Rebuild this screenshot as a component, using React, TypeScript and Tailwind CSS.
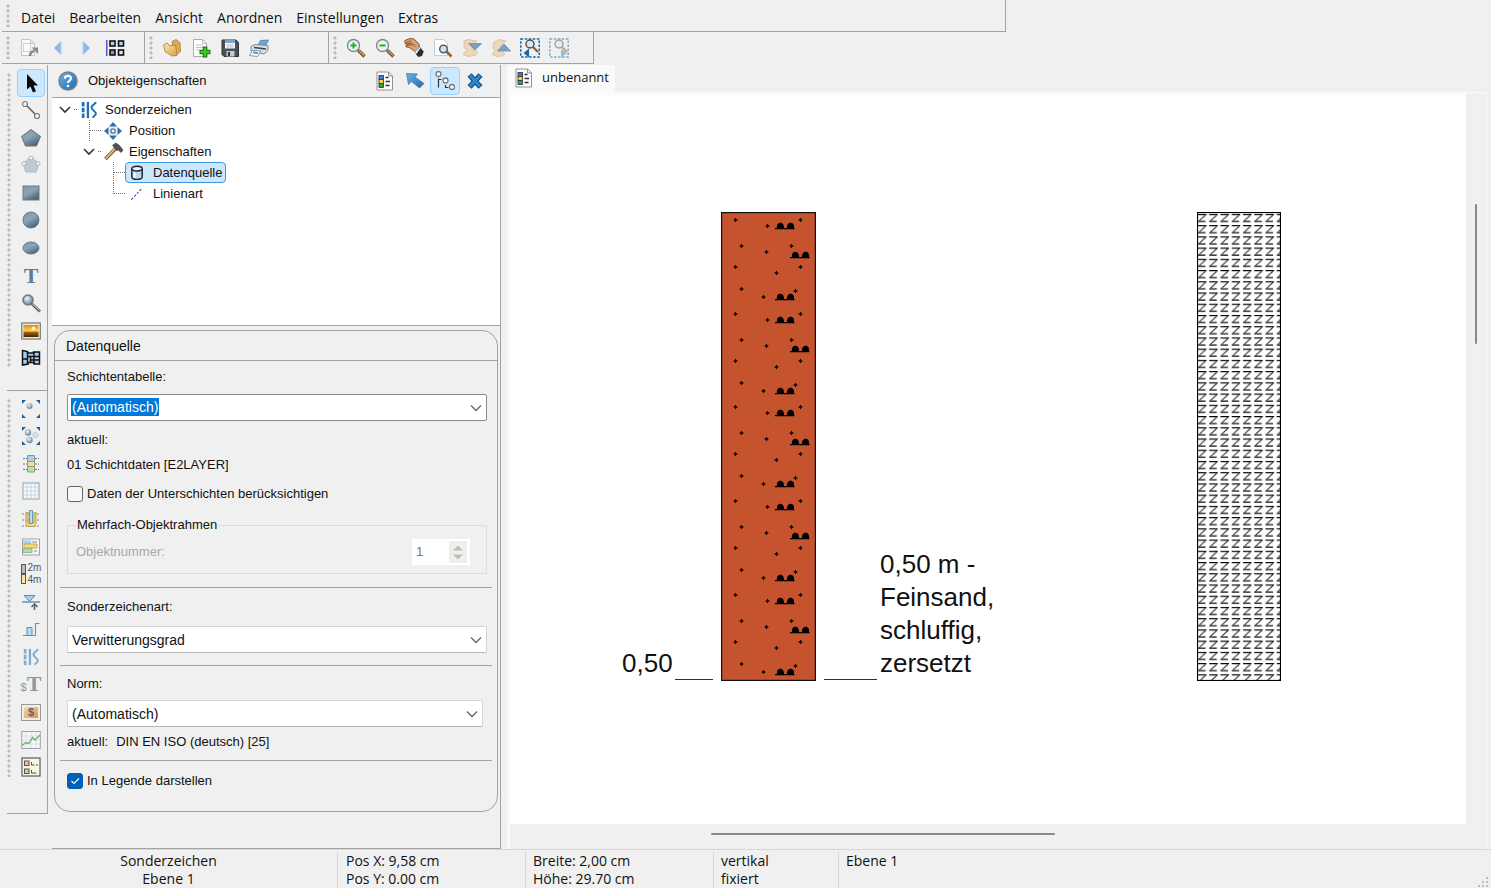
import { ReactNode, useState } from "react";

const UI_FONT = "font-['Open_Sans','Noto_Sans',sans-serif]";
const FORM_FONT = "font-['Liberation_Sans',Arial,sans-serif]";

function Svg({ children, size = "size-5" }: { children: ReactNode; size?: string }) {
  return (
    <svg viewBox="0 0 20 20" className={`shrink-0 ${size}`} fill="none" aria-hidden="true">
      {children}
    </svg>
  );
}

function Gradients() {
  return (
    <svg className="absolute size-0" aria-hidden="true">
      <defs>
        <linearGradient id="steel" x1="0" y1="0" x2="0.6" y2="1">
          <stop offset="0" stopColor="#7d98ab" />
          <stop offset="0.5" stopColor="#8aa5b8" />
          <stop offset="1" stopColor="#4d667a" />
        </linearGradient>
        <linearGradient id="folder" x1="0" y1="0" x2="1" y2="1">
          <stop offset="0" stopColor="#fae5ae" />
          <stop offset="1" stopColor="#d9a545" />
        </linearGradient>
        <linearGradient id="blue" x1="0" y1="0" x2="1" y2="1">
          <stop offset="0" stopColor="#6db4e8" />
          <stop offset="1" stopColor="#1c68ae" />
        </linearGradient>
        <linearGradient id="sunset" x1="0" y1="0" x2="0" y2="1">
          <stop offset="0" stopColor="#d98a12" />
          <stop offset="0.5" stopColor="#ffd35c" />
          <stop offset="0.6" stopColor="#a95f0c" />
          <stop offset="1" stopColor="#3d260d" />
        </linearGradient>
        <radialGradient id="ball" cx="0.4" cy="0.35" r="0.7">
          <stop offset="0" stopColor="#eef4f8" />
          <stop offset="1" stopColor="#5c7b92" />
        </radialGradient>
      </defs>
    </svg>
  );
}

/* ---------- toolbar icons ---------- */

const PageExport = () => (
  <Svg>
    <path d="M2.500 1.500h9l4 4v12h-13z" fill="#fafafa" stroke="#c2c5cc" />
    <path d="M11.500 1.500v4h4" stroke="#c2c5cc" />
    <path d="M4.500 5.500h7v8h-7z" stroke="#9aa0ee" strokeDasharray="1 1" />
    <path d="M11 18c0-3 1-4.500 4-5" stroke="#898989" strokeWidth="2.400" />
    <path d="M12.500 9.500h6.500v6.500z" fill="#898989" />
  </Svg>
);

const Prev = () => (
  <Svg>
    <path d="M13 3.500v13L6 10z" fill="#8fb8ea" stroke="#b5cff0" />
  </Svg>
);

const Next = () => (
  <Svg>
    <path d="M6 3.500v13L13 10z" fill="#8fb8ea" stroke="#b5cff0" />
  </Svg>
);

const Tiles = () => (
  <Svg>
    <path d="M.8 2v16" stroke="#2334c0" strokeWidth="1.200" />
    <g fill="#b9d2f3" stroke="#111" strokeWidth="1.600">
      <rect x="4" y="3" width="5" height="5" />
      <rect x="12.500" y="3" width="5" height="5" />
      <rect x="4" y="12" width="5" height="5" fill="#6b9bdc" />
      <rect x="12.500" y="12" width="5" height="5" fill="#dbe8fa" />
    </g>
  </Svg>
);

const OpenFolder = () => (
  <Svg>
    <path d="M10 3.500l4-2 4 3 .5 9-5.500 4z" fill="#dca954" stroke="#a67d35" strokeWidth=".8" />
    <path d="M1.500 7l3.500-2 2.500 2.500 6-.5 1.500 10.500-5 .5L3 13.500z" fill="url(#folder)" stroke="#a67d35" strokeWidth=".8" />
  </Svg>
);

const AddPage = () => (
  <Svg>
    <path d="M2.500 1.500h9l4 4v13h-13z" fill="#fdfdfd" stroke="#a9adb3" />
    <path d="M11.500 1.500v4h4M5 7h7M5 9.500h8M5 12h5" stroke="#bfc3c8" />
    <path d="M14 8.500v11M8.500 14h11" stroke="#16750b" strokeWidth="4.600" />
    <path d="M14 9.500v9M9.500 14h9" stroke="#40c32b" strokeWidth="2.600" />
  </Svg>
);

const Save = () => (
  <Svg>
    <path d="M2 2h14l2.500 2.500v14H4L2 16.500z" fill="#4a5159" stroke="#2d3238" />
    <path d="M5 2.500h10v8H5z" fill="#f3f7fb" />
    <path d="M5 2.500h10v2.500H5z" fill="#74a9d8" />
    <path d="M6.500 7h7M6.500 9h7" stroke="#b4bdc5" />
    <path d="M6.500 13h8v5.500h-8z" fill="#c5cad0" />
    <path d="M8 14h2v4H8z" fill="#2d3238" />
  </Svg>
);

const Print = () => (
  <Svg>
    <path d="M8.500 8l3-5.500 8-.5-3.500 6.500z" fill="#69abe0" stroke="#5c7990" strokeWidth=".8" />
    <path d="M2 8.500l4-2 13 1v5l-4 3.500-13-3z" fill="#d7dde2" stroke="#69757f" strokeWidth=".8" />
    <path d="M5 9.500l12 1.500" stroke="#3a4650" strokeWidth="1.500" />
    <path d="M3.500 12.500l8.500.5-3.500 5.500-8-1z" fill="#fff" stroke="#63809a" strokeWidth=".8" />
    <path d="M4 14.500l5 .5" stroke="#4f9bdb" strokeWidth="2" />
  </Svg>
);

function Loupe({ sign }: { sign: "plus" | "minus" }) {
  return (
    <Svg>
      <path d="M11.500 11.500l2 2" stroke="#666" strokeWidth="2" />
      <path d="M12.500 12.500l6 6" stroke="#7c5a32" strokeWidth="3.500" />
      <path d="M13 12.500l5 5" stroke="#c59b63" strokeWidth="1.200" />
      <circle cx="7.500" cy="7.500" r="6" fill="#e4f6ea" stroke="#7e8a92" strokeWidth="1.400" />
      <path d="M4.500 7.500h6" stroke="#2ca92c" strokeWidth="2" />
      {sign === "plus" && <path d="M7.500 4.500v6" stroke="#2ca92c" strokeWidth="2" />}
    </Svg>
  );
}

const Hand = () => (
  <Svg>
    <path d="M.8 2.500l5-2 4 .5 5 4.500 1 5-4 3.500-6.500-4.500-3-.5-.5-1.500 3-.5L1 5.500z" fill="#d9a071" stroke="#7d4c29" strokeWidth=".9" />
    <path d="M2 4.500l5-1.500M2.500 6l6-1M5 7l4-.5 2.500 2" stroke="#8d5933" />
    <path d="M16 9l1.500 1.500-4.500 6-2-2.500z" fill="#f4f4f4" stroke="#999" strokeWidth=".6" />
    <path d="M16.500 10l3.200 3.500-1.700 4.500-3.500 1-2.500-2.500z" fill="#2c2c2c" />
  </Svg>
);

const PageZoom = () => (
  <Svg>
    <path d="M1.500 1.500h9l4 4v12h-13z" fill="#fcfcfc" stroke="#c6c9cd" />
    <path d="M13.500 13.500l5 5" stroke="#8c6538" strokeWidth="2.600" />
    <circle cx="10.500" cy="11" r="3.800" fill="#cfe3f3" stroke="#555e66" strokeWidth="1.500" />
  </Svg>
);

const LayerDown = () => (
  <Svg>
    <path d="M2 3l4-1.500 9 1.500-6 4 1 4 6 3-3 3.500-7 1-5-2 2-3 3-1-4-3z" fill="#ecd7bb" stroke="#d5bd9f" strokeWidth=".8" />
    <path d="M6.500 5.500h13l-6.500 6.500z" fill="#7f9fc2" stroke="#7897ba" />
  </Svg>
);

const LayerUp = () => (
  <Svg>
    <path d="M3 4l5-2.500 7 1.500-5 4-1 5 5 4-2 2-6 .5-5-2 3-3.500-2-3z" fill="#ecd7bb" stroke="#d5bd9f" strokeWidth=".8" />
    <path d="M6.500 13h13l-6.500-7z" fill="#7f9fc2" stroke="#7897ba" />
  </Svg>
);

function RegionZoom({ direction }: { direction: "back" | "forward" }) {
  return (
    <Svg>
      <g opacity={direction === "forward" ? 0.5 : 1}>
        <path d="M.8 1h18.400v18H.8z" stroke="#1668a8" strokeWidth="1.500" strokeDasharray="2.500 1.500" />
        <path d="M13 9l5 5" stroke="#8c6538" strokeWidth="2.400" />
        <circle cx="10" cy="6" r="4" fill="#d6e8f6" stroke="#4d4d4d" strokeWidth="1.400" />
        {direction === "back" ? (
          <path d="M9 10.500v9L3.500 15z" fill="#1668a8" />
        ) : (
          <path d="M12 11v8.500l6-4.200z" fill="#4b86bd" />
        )}
      </g>
    </Svg>
  );
}

/* ---------- panel icons ---------- */

const Help = () => (
  <Svg>
    <circle cx="10" cy="10" r="9" fill="url(#blue)" stroke="#71808c" strokeWidth="1.500" />
    <path d="M6.800 7.800c0-4 6.600-3.800 6.200-.3-.2 1.800-3 2-3 4.500" stroke="#fff" strokeWidth="2.100" />
    <circle cx="10" cy="15" r="1.300" fill="#fff" />
  </Svg>
);

const LegendPage = () => (
  <Svg>
    <path d="M2 1h11.500l4 4v14H2z" fill="#fdfdfd" stroke="#8e9297" />
    <path d="M13.500 1v4h4" stroke="#8e9297" />
    <rect x="4" y="4.500" width="4.500" height="4" fill="#3b79c4" stroke="#333" strokeWidth=".8" />
    <rect x="4" y="8.500" width="4.500" height="4" fill="#f3d33e" stroke="#333" strokeWidth=".8" />
    <rect x="4" y="12.500" width="4.500" height="4" fill="#3d9b43" stroke="#333" strokeWidth=".8" />
    <path d="M10.500 6.500h3M10.500 10.500h4.500M10.500 14.500h4" stroke="#333" strokeWidth="1.300" />
  </Svg>
);

const BackArrow = () => (
  <Svg>
    <path d="M1.500 2.500l11 .5-2.500 3 9 6.500-4.500 4.500-8-6.500-3 3z" fill="url(#blue)" stroke="#527b9d" strokeWidth=".8" />
  </Svg>
);

const TreeMode = () => (
  <Svg>
    <g stroke="#777" strokeWidth="1.300" fill="#fff">
      <circle cx="3.500" cy="3" r="2.500" />
      <circle cx="10.500" cy="9.500" r="2.500" />
      <circle cx="17" cy="16" r="2.500" />
    </g>
    <path d="M3.500 7.500v9M3.500 8.500h3M10.500 14v2.500h3" stroke="#333" strokeWidth="1.200" />
  </Svg>
);

const Close = () => (
  <Svg>
    <path d="M4.500 4l11 12M15.500 4l-11 12" stroke="#174e7c" strokeWidth="5.500" />
    <path d="M5 4.500l10 11M15 4.500l-10 11" stroke="#2f86cc" strokeWidth="3.200" />
  </Svg>
);

const Weathering = ({ color = "#1f6fb2" }: { color?: string }) => (
  <Svg size="size-[18px]">
    <path d="M3.500 1v18" stroke={color} strokeWidth="3" strokeDasharray="5 1.500" />
    <path d="M8.800 1v18" stroke={color} strokeWidth="2.600" />
    <path d="M18 1.500l-4.500 4c-1.500 2-.5 3.500 1.500 5s3.500 3 2 5l-3 3" stroke={color} strokeWidth="2.200" />
  </Svg>
);

const Move = () => (
  <Svg size="size-[18px]">
    <path d="M10 0l4.500 5h-9zM10 20l4.500-5h-9zM0 10l5-4.500v9zM20 10l-5-4.500v9z" fill="#2a6cae" />
    <path d="M6 6h8v8H6z" fill="#c9dcec" />
    <circle cx="10" cy="10" r="2.300" fill="#f5f8fb" stroke="#4d6477" strokeWidth="1.200" />
  </Svg>
);

const Hammer = () => (
  <Svg size="size-[19px]">
    <path d="M12.500 6.500L1.500 18" stroke="#7b582e" strokeWidth="3.800" />
    <path d="M12.500 6L2 17.500" stroke="#dcb980" strokeWidth="2" />
    <path d="M9 3.500l3.500-2.500 3.500 2.500 4 5-2 2.500-3-2.500-1.500.5-2.500-3z" fill="#555" stroke="#292929" strokeWidth=".6" />
  </Svg>
);

const Database = () => (
  <Svg size="size-4">
    <path d="M3.500 5v10c0 4 13 4 13 0V5" fill="#bcd6ec" stroke="#1b2630" strokeWidth="1.800" />
    <ellipse cx="10" cy="4.500" rx="6.500" ry="3" fill="#f1f7fc" stroke="#1b2630" strokeWidth="1.800" />
    <path d="M7 9.500v6.500" stroke="#fff" strokeWidth="2.500" />
  </Svg>
);

const LineStyle = () => (
  <Svg size="size-4">
    <path d="M3 17L16 3" stroke="#3144b3" strokeWidth="1.300" strokeDasharray="3 2" />
  </Svg>
);

/* ---------- drawing tools ---------- */

const PointerTool = () => (
  <Svg>
    <path d="M6 1v15.500l3.500-3 2.500 6 3-1.300-2.500-5.700h4.500z" fill="#0a0a0a" />
  </Svg>
);

const LineTool = () => (
  <Svg>
    <path d="M5 5l10 10" stroke="#555" strokeWidth="1.400" />
    <circle cx="4" cy="4" r="2.500" fill="#f5f5f5" stroke="#777" strokeWidth="1.200" />
    <circle cx="16" cy="16" r="2.500" fill="#f5f5f5" stroke="#777" strokeWidth="1.200" />
  </Svg>
);

const PolygonTool = () => (
  <Svg>
    <path d="M10 1.500l9.500 7-4 9.500h-11l-4-9.500z" fill="url(#steel)" stroke="#6a7276" />
  </Svg>
);

const EditPolygonTool = () => (
  <Svg>
    <path d="M10 2l8 6.500-3 8.500H5L2 8.500z" fill="#bccad3" stroke="#b2babf" />
    <g fill="#f5f5f5" stroke="#b0b6ba">
      <circle cx="10" cy="3" r="2" />
      <circle cx="3" cy="8.500" r="2" />
      <circle cx="17" cy="8.500" r="2" />
    </g>
  </Svg>
);

const RectTool = () => (
  <Svg>
    <rect x="2" y="3" width="16" height="14" fill="url(#steel)" stroke="#6f787d" />
  </Svg>
);

const CircleTool = () => (
  <Svg>
    <circle cx="10" cy="10" r="8" fill="url(#steel)" stroke="#6f787d" />
  </Svg>
);

const EllipseTool = () => (
  <Svg>
    <ellipse cx="10" cy="10" rx="8" ry="6" fill="url(#steel)" stroke="#6f787d" />
  </Svg>
);

function TextTool() {
  return (
    <span className="font-['Liberation_Serif',serif] text-[22px] leading-5 font-bold text-[#5f7d92]" aria-hidden="true">
      T
    </span>
  );
}

const SearchTool = () => (
  <Svg>
    <path d="M10 10l9 8.500" stroke="#666" strokeWidth="3" />
    <path d="M11 10.500l7.500 7" stroke="#ccc" strokeWidth="1" />
    <circle cx="7" cy="7" r="5" fill="url(#ball)" stroke="#777" strokeWidth="1.600" />
  </Svg>
);

const ImageTool = () => (
  <Svg>
    <rect x=".8" y="2" width="18.500" height="16" fill="#efe9df" stroke="#777" strokeWidth="1.200" />
    <rect x="2.500" y="4" width="15" height="12" fill="url(#sunset)" />
    <circle cx="12.500" cy="7.500" r="2" fill="#fff4b8" />
  </Svg>
);

const MapTool = () => (
  <Svg>
    <path d="M1.500 2.500l5 1v1.500h6v-1h6v12h-5.500v-1.500h-6v1.500l-5.500 1z" fill="#a4ccf0" stroke="#111" strokeWidth="1.500" />
    <path d="M6.500 4v12.500M13 4v12M2 11h4.500M6.500 8.500h12M9.500 8.500v6M9.500 12h9" stroke="#111" strokeWidth="1.400" />
  </Svg>
);

/* ---------- geology tools ---------- */

function Corners() {
  return <path d="M1 5V1h4zM19 5V1h-4zM1 15v4h4zM19 15v4h-4z" fill="#1d5e97" />;
}

const FrameOne = () => (
  <Svg>
    <Corners />
    <circle cx="8.500" cy="7" r="3" fill="url(#ball)" />
  </Svg>
);

const FrameMany = () => (
  <Svg>
    <Corners />
    <circle cx="7" cy="6.500" r="3.200" fill="url(#ball)" />
    <circle cx="14.500" cy="9" r="2.800" fill="#d4dfe7" stroke="#b7c3cb" strokeWidth=".6" />
    <circle cx="8.500" cy="14" r="3.200" fill="url(#ball)" />
  </Svg>
);

const ColumnTool = () => (
  <Svg>
    <path d="M2 4.500h16M2 10h16M2 15.500h16" stroke="#777" strokeWidth="1.200" strokeDasharray="2 1" />
    <path d="M6.500 1.500h7v6h-7z" fill="#a8d0f0" stroke="#8399aa" />
    <path d="M6.500 7.500h7v5h-7z" fill="#f5df8f" stroke="#a39a70" />
    <path d="M6.500 12.500h7v5.500h-7z" fill="#b7e3ab" stroke="#86a07c" />
  </Svg>
);

const GridTool = () => (
  <Svg>
    <rect x="2" y="2" width="16" height="16" fill="#f6f9fb" stroke="#a5b2bc" strokeWidth="1.300" />
    <path d="M6 2v16M10 2v16M14 2v16M2 6h16M2 10h16M2 14h16" stroke="#c8d4de" />
  </Svg>
);

const WellTool = () => (
  <Svg>
    <path d="M1 5h18M1 11h18M1 17h18" stroke="#888" strokeDasharray="2 1" />
    <path d="M5 3.500h2v10h6v-10h2v11l-2 3H7l-2-3z" fill="#f0dc88" stroke="#b49d4a" />
    <path d="M8.500 1.500h3v13h-3z" fill="#b7dcf2" stroke="#6696b5" />
  </Svg>
);

const SectionTool = () => (
  <Svg>
    <rect x="1.500" y="2" width="17" height="16" fill="#f6f6f6" stroke="#9da3a7" />
    <path d="M2 3.500h8v3.500H2z" fill="#a8d0f0" />
    <path d="M3 7h13v4H3z" fill="#f3dc7a" stroke="#a9954a" strokeWidth=".7" />
    <path d="M2 11.500h9v4H2z" fill="#b3dda6" stroke="#7ca26f" strokeWidth=".7" />
    <path d="M11 5h5M13 14h3" stroke="#888" />
  </Svg>
);

function ScaleTool() {
  return (
    <span className="flex items-center gap-[2px]" aria-hidden="true">
      <svg viewBox="0 0 5 20" className="h-5 w-[5px]">
        <rect x=".5" y=".5" width="4" height="9" fill="#bbb" stroke="#555" />
        <rect x=".5" y="10.500" width="4" height="9" fill="#ffe5a0" stroke="#555" />
      </svg>
      <span className="flex flex-col font-['Liberation_Sans',sans-serif] text-[10px] leading-[12px] text-[#555]">
        <span>2m</span>
        <span>4m</span>
      </span>
    </span>
  );
}

const WaterTool = () => (
  <Svg>
    <path d="M3 3.500h11l-5.500 6z" fill="#a5cff0" stroke="#5c8db4" />
    <path d="M1 10h18" stroke="#6d7d89" strokeWidth="1.300" />
    <path d="M13.500 18v-5M10.500 15l3-3 3 3" stroke="#666" strokeWidth="1.600" />
  </Svg>
);

const StepTool = () => (
  <Svg>
    <path d="M2 16.500h12.500V4.500h4" stroke="#7d8f9c" strokeWidth="1.200" />
    <path d="M6 8.500h5v8H6z" fill="#b8dcf5" stroke="#5c8db4" />
  </Svg>
);

function FieldTextTool() {
  return (
    <span className="flex items-end text-[#8599a8]" aria-hidden="true">
      <span className="font-['Liberation_Sans',sans-serif] text-[11px] leading-[14px]">$</span>
      <span className="font-['Liberation_Serif',serif] text-[22px] leading-5 font-bold">T</span>
    </span>
  );
}

function FieldImageTool() {
  return (
    <span
      className="flex h-[17px] w-5 items-center justify-center border border-[#999] bg-[#f1eee8] p-[2px]"
      aria-hidden="true"
    >
      <span className="flex-1 bg-gradient-to-br from-[#efd9ae] to-[#d19c48] text-center font-['Liberation_Sans',sans-serif] text-[11px] leading-[11px] font-bold text-[#6f5670]">
        $
      </span>
    </span>
  );
}

const ChartTool = () => (
  <Svg>
    <rect x=".8" y="1.500" width="18.500" height="17" fill="#f4f7fa" stroke="#9ba2a8" />
    <path d="M1 6h18M1 10h18M1 14h18M5 2v16M10 2v16M15 2v16" stroke="#d3dde6" strokeWidth=".8" />
    <path d="M1 15.500l4-3 3 1 3.500-6 2.500 2.500 5-5" stroke="#76b06c" strokeWidth="1.400" />
  </Svg>
);

const LegendTool = () => (
  <Svg>
    <rect x="1" y="1" width="18" height="18" fill="#f8f5e4" stroke="#666" strokeWidth="1.300" />
    <rect x="3.500" y="4" width="4.500" height="4.500" fill="#f3b4b4" stroke="#555" />
    <rect x="3.500" y="12" width="4.500" height="4.500" fill="#abe0ab" stroke="#555" />
    <path d="M10.500 5v3h3M15 8h2M10.500 13v3h5" stroke="#555" />
  </Svg>
);

type Tool = { label: string; icon: ReactNode };

const VIEW_TOOLS: Tool[] = [
  { label: "Seite exportieren", icon: <PageExport /> },
  { label: "Zurück", icon: <Prev /> },
  { label: "Vor", icon: <Next /> },
  { label: "Übersicht", icon: <Tiles /> },
];

const FILE_TOOLS: Tool[] = [
  { label: "Öffnen", icon: <OpenFolder /> },
  { label: "Neu", icon: <AddPage /> },
  { label: "Speichern", icon: <Save /> },
  { label: "Drucken", icon: <Print /> },
];

const ZOOM_TOOLS: Tool[] = [
  { label: "Vergrößern", icon: <Loupe sign="plus" /> },
  { label: "Verkleinern", icon: <Loupe sign="minus" /> },
  { label: "Verschieben", icon: <Hand /> },
  { label: "Ganze Seite", icon: <PageZoom /> },
  { label: "Schicht abwärts", icon: <LayerDown /> },
  { label: "Schicht aufwärts", icon: <LayerUp /> },
  { label: "Voriger Ausschnitt", icon: <RegionZoom direction="back" /> },
  { label: "Nächster Ausschnitt", icon: <RegionZoom direction="forward" /> },
];

const DRAW_TOOLS: Tool[] = [
  { label: "Auswahl", icon: <PointerTool /> },
  { label: "Linie", icon: <LineTool /> },
  { label: "Polygon", icon: <PolygonTool /> },
  { label: "Polygon bearbeiten", icon: <EditPolygonTool /> },
  { label: "Rechteck", icon: <RectTool /> },
  { label: "Kreis", icon: <CircleTool /> },
  { label: "Ellipse", icon: <EllipseTool /> },
  { label: "Text", icon: <TextTool /> },
  { label: "Symbol", icon: <SearchTool /> },
  { label: "Bild", icon: <ImageTool /> },
  { label: "Karte", icon: <MapTool /> },
];

const GEO_TOOLS: Tool[] = [
  { label: "Objektrahmen", icon: <FrameOne /> },
  { label: "Mehrfach-Objektrahmen", icon: <FrameMany /> },
  { label: "Schichtsäule", icon: <ColumnTool /> },
  { label: "Tabelle", icon: <GridTool /> },
  { label: "Ausbau", icon: <WellTool /> },
  { label: "Schnitt", icon: <SectionTool /> },
  { label: "Maßstab", icon: <ScaleTool /> },
  { label: "Wasserstand", icon: <WaterTool /> },
  { label: "Rammdiagramm", icon: <StepTool /> },
  { label: "Sonderzeichen", icon: <Weathering color="#7fadd2" /> },
  { label: "Datenfeld", icon: <FieldTextTool /> },
  { label: "Datenbild", icon: <FieldImageTool /> },
  { label: "Diagramm", icon: <ChartTool /> },
  { label: "Legende", icon: <LegendTool /> },
];

const MENUS = ["Datei", "Bearbeiten", "Ansicht", "Anordnen", "Einstellungen", "Extras"];

function Grip() {
  return <span className="my-1 w-1 shrink-0 bg-[radial-gradient(circle_at_2px_2px,#b8b8b8_1px,transparent_2px)] bg-[length:4px_5px]" />;
}

function MenuBar() {
  return (
    <nav className="ml-[2px] flex h-8 w-[1004px] max-w-full border-r border-b border-[#a3a3a3] pl-1">
      <Grip />
      <div className="ml-1 flex items-center pt-1">
        {MENUS.map((m) => (
          <button key={m} className="px-[7px] text-[14px] leading-5 hover:bg-[#cce4f7]">
            {m}
          </button>
        ))}
      </div>
    </nav>
  );
}

function ToolGroup({ tools, width }: { tools: Tool[]; width: string }) {
  return (
    <div className={`flex h-8 border-r border-b border-[#a3a3a3] pl-1 ${width}`}>
      <Grip />
      <div className="ml-1 flex items-center">
        {tools.map((tool) => (
          <button key={tool.label} title={tool.label} className="flex h-7 w-[29px] items-center justify-center hover:bg-[#e0eefa]">
            {tool.icon}
          </button>
        ))}
      </div>
    </div>
  );
}

function ToolColumn({ tools, height, active }: { tools: Tool[]; height: string; active?: string }) {
  return (
    <div className={`flex border-b border-[#a3a3a3] pt-1 ${height}`}>
      <Grip />
      <div className="ml-[6px] grid w-7 auto-rows-fr">
        {tools.map((tool) => (
          <button
            key={tool.label}
            title={tool.label}
            className={
              tool.label === active
                ? "flex items-center justify-center rounded-sm border border-[#99d1ff] bg-[#cce8ff]"
                : "flex items-center justify-center rounded-sm hover:bg-[#e0eefa]"
            }
          >
            {tool.icon}
          </button>
        ))}
      </div>
    </div>
  );
}

function Chevron({ className }: { className: string }) {
  return (
    <svg viewBox="0 0 12 8" className={className} fill="none" aria-hidden="true">
      <path d="M1 1.500l5 5 5-5" stroke="currentColor" strokeWidth="1.300" />
    </svg>
  );
}

type TreeNode = {
  label: string;
  icon: ReactNode;
  indent: string;
  kind: "open" | "branch" | "last";
};

const TREE: TreeNode[] = [
  { label: "Sonderzeichen", icon: <Weathering />, indent: "pl-[5px]", kind: "open" },
  { label: "Position", icon: <Move />, indent: "pl-[29px]", kind: "branch" },
  { label: "Eigenschaften", icon: <Hammer />, indent: "pl-[29px]", kind: "open" },
  { label: "Datenquelle", icon: <Database />, indent: "pl-[53px]", kind: "branch" },
  { label: "Linienart", icon: <LineStyle />, indent: "pl-[53px]", kind: "last" },
];

function Connector({ kind }: { kind: TreeNode["kind"] }) {
  return (
    <svg viewBox="0 0 20 21" className="h-[21px] w-5 shrink-0" fill="none" aria-hidden="true">
      {kind === "open" && <path d="M3 8l5 5 5-5" stroke="#333" strokeWidth="1.600" />}
      {kind === "open" && <path d="M17 10.500h3" stroke="#666" strokeDasharray="1 1" />}
      {kind === "branch" && <path d="M8.500 0v21" stroke="#777" strokeDasharray="1 1" />}
      {kind === "last" && <path d="M8.500 0v11" stroke="#777" strokeDasharray="1 1" />}
      {kind !== "open" && <path d="M9 10.500h11" stroke="#777" strokeDasharray="1 1" />}
    </svg>
  );
}

function ObjectTree() {
  const [selected, setSelected] = useState("Datenquelle");
  return (
    <ul className="h-[229px] border-y border-[#a3a3a3] bg-white pt-[1px]">
      {TREE.map((node) => (
        <li key={node.label} className={`flex h-[21px] items-center ${node.indent}`}>
          <Connector kind={node.kind} />
          <button
            onClick={() => setSelected(node.label)}
            className={
              node.label === selected
                ? "flex h-[21px] items-center gap-2 rounded-sm border border-[#3f97dd] bg-[#cce8ff] px-[3px]"
                : "flex h-[21px] items-center gap-2 border border-transparent px-[3px]"
            }
          >
            <span className="flex size-4 items-center justify-center">{node.icon}</span>
            {node.label}
          </button>
        </li>
      ))}
    </ul>
  );
}

function Select({ id, options, highlighted, className }: { id: string; options: string[]; highlighted?: boolean; className: string }) {
  return (
    <div className={`relative text-[14px] ${className}`}>
      <select
        id={id}
        className={
          highlighted
            ? "block h-[27px] w-full appearance-none rounded-xs border border-[#8a8a8a] bg-white bg-[linear-gradient(#0078d7,#0078d7)] bg-[length:88px_18px] bg-[position:3px_3px] bg-no-repeat pr-7 pb-[2px] pl-1 text-white outline-none"
            : "block h-[27px] w-full appearance-none rounded-xs border border-[#d4d4d4] border-b-[#b5b5b5] bg-white pr-7 pl-1 outline-none"
        }
      >
        {options.map((o) => (
          <option key={o} className="bg-white text-black">
            {o}
          </option>
        ))}
      </select>
      <Chevron className="pointer-events-none absolute top-[10px] right-[5px] h-2 w-3 text-[#666]" />
    </div>
  );
}

function CheckBox({ label, initial }: { label: string; initial: boolean }) {
  const [checked, setChecked] = useState(initial);
  return (
    <label className="flex h-5 items-center gap-1">
      <span className="relative flex size-4">
        <input
          type="checkbox"
          checked={checked}
          onChange={(e) => setChecked(e.target.checked)}
          className="size-4 appearance-none rounded-[3px] border border-[#666] bg-[#f6f6f6] checked:border-[#005fb8] checked:bg-[#005fb8]"
        />
        {checked && (
          <svg viewBox="0 0 16 16" className="pointer-events-none absolute inset-0 size-4" fill="none" aria-hidden="true">
            <path d="M4.500 8l2.500 2.500 5-5" stroke="#fff" strokeWidth="1.100" />
          </svg>
        )}
      </span>
      {label}
    </label>
  );
}

function DataSourceForm() {
  return (
    <section className="mx-[2px] mt-1 rounded-2xl border border-[#a3a3a3] pb-5">
      <h2 className="h-[30px] border-b border-[#a3a3a3] pl-[11px] text-[14px] leading-[30px]">Datenquelle</h2>
      <div className="pt-[6px] pr-[10px] pl-3">
        <label htmlFor="layer-table" className="block">
          Schichtentabelle:
        </label>
        <Select id="layer-table" options={["(Automatisch)", "01 Schichtdaten"]} highlighted className="mt-[7px]" />
        <p className="mt-[9px]">aktuell:</p>
        <p className="mt-[5px] mb-[9px]">01 Schichtdaten [E2LAYER]</p>
        <CheckBox label="Daten der Unterschichten berücksichtigen" initial={false} />
        <fieldset disabled className="mt-[11px] border border-[#dcdcdc] pt-[2px] pr-4 pb-[6px] pl-2">
          <legend className="px-[1px]">Mehrfach-Objektrahmen</legend>
          <div className="flex h-[30px] items-center justify-between">
            <label htmlFor="object-number" className="text-[#a8a8a8]">
              Objektnummer:
            </label>
            <div className="flex h-[26px] w-[58px] items-center bg-white p-[2px]">
              <input
                id="object-number"
                type="text"
                inputMode="numeric"
                defaultValue="1"
                className="w-[35px] bg-transparent pl-[2px] text-[#777]"
              />
              <svg viewBox="0 0 18 22" className="h-[22px] w-[18px] bg-[#efefeb]" aria-hidden="true">
                <path d="M4 9.500L9 4.500l5 5zM4 13.500l5 5 5-5z" fill="#bdbdb8" />
              </svg>
            </div>
          </div>
        </fieldset>
      </div>

      <div className="mx-[5px] mt-[13px] border-t border-[#a3a3a3] pt-[9px] pr-[5px] pl-[7px]">
        <label htmlFor="sign-kind" className="block">
          Sonderzeichenart:
        </label>
        <Select id="sign-kind" options={["Verwitterungsgrad", "Festigkeit"]} className="mt-[9px]" />
      </div>

      <div className="mx-[5px] mt-3 border-t border-[#a3a3a3] pt-2 pr-[5px] pl-[7px]">
        <label htmlFor="norm" className="block">
          Norm:
        </label>
        <Select id="norm" options={["(Automatisch)", "DIN EN ISO"]} className="mt-[6px] mr-1" />
        <p className="mt-[5px] flex gap-2">
          <span>aktuell:</span>
          <span>DIN EN ISO (deutsch) [25]</span>
        </p>
      </div>

      <div className="mx-[5px] mt-2 border-t border-[#a3a3a3] px-[7px] pt-[10px]">
        <CheckBox label="In Legende darstellen" initial />
      </div>
    </section>
  );
}

const PANEL_ACTIONS: Tool[] = [
  { label: "Legende", icon: <LegendPage /> },
  { label: "Übernehmen", icon: <BackArrow /> },
  { label: "Baumansicht", icon: <TreeMode /> },
  { label: "Schließen", icon: <Close /> },
];

function PropertiesPanel() {
  return (
    <aside className={`flex w-[449px] shrink-0 flex-col border-r border-b border-[#a3a3a3] text-[13px] leading-5 ${FORM_FONT}`}>
      <header className="flex h-8 items-center pr-[10px] pl-[6px]">
        <Help />
        <h1 className="ml-[10px] flex-1">Objekteigenschaften</h1>
        {PANEL_ACTIONS.map((action) => (
          <button
            key={action.label}
            title={action.label}
            className={
              action.label === "Baumansicht"
                ? "flex h-7 w-[30px] items-center justify-center rounded-sm border border-[#99d1ff] bg-[#cce8ff]"
                : "flex h-7 w-[30px] items-center justify-center"
            }
          >
            {action.icon}
          </button>
        ))}
      </header>
      <ObjectTree />
      <DataSourceForm />
    </aside>
  );
}

/* ---------- drawing ---------- */

const GRAINS = [
  [14, 8],
  [79, 8],
  [46, 14],
  [20, 34],
  [70, 34],
  [45, 40],
  [14, 55],
  [79, 55],
  [55, 61],
  [20, 77],
  [74, 79],
  [42, 85],
];

const MOUNDS = [
  [54, 16],
  [69, 45],
  [54, 87],
];

const REPEATS = [0, 94, 187, 281, 375];

function SoilColumn() {
  return (
    <svg viewBox="0 0 95 469" className="absolute top-[117px] left-[211px] h-[469px] w-[95px]" aria-label="Feinsand, schluffig, zersetzt">
      <rect x=".5" y=".5" width="94" height="468" fill="#c5532e" stroke="#111" strokeWidth="1.400" />
      {REPEATS.map((offset) => (
        <g key={offset} transform={`translate(0 ${offset})`}>
          {GRAINS.map(([x, y]) => (
            <g key={`${x}-${y}`}>
              <path d={`M${x - 1.5} ${y}h4M${x + 0.5} ${y - 2}v4`} stroke="#000" />
              <circle cx={x + 0.5} cy={y} r="1.200" fill="#000" />
            </g>
          ))}
          {MOUNDS.map(([x, y]) => (
            <path
              key={`${x}-${y}`}
              d={`M${x} ${y}h2c-1-7 7.500-7 7 0h3c-.5-7 8-7 7 0h.5v1.200H${x}z`}
              fill="#000"
            />
          ))}
        </g>
      ))}
    </svg>
  );
}

function WeatheringColumn() {
  return (
    <svg viewBox="0 0 84 469" className="absolute top-[117px] left-[687px] h-[469px] w-[84px]" aria-label="Verwitterungsgrad">
      <defs>
        <pattern id="hatch" width="11.25" height="11.23" patternUnits="userSpaceOnUse">
          <path d="M1 2.500h8.500M1 9.500h7.500" stroke="#000" strokeWidth="1.200" />
          <path d="M8.500 3L2 9" stroke="#333" strokeWidth="1.100" />
        </pattern>
      </defs>
      <rect x=".5" y=".5" width="83" height="468" fill="url(#hatch)" stroke="#000" strokeWidth="1.200" />
    </svg>
  );
}

function Canvas() {
  return (
    <div className="relative flex-1 overflow-hidden bg-white font-['Liberation_Sans',Arial,sans-serif] text-[26px] leading-[33px]">
      <p className="absolute top-[552px] left-[112px]">0,50</p>
      <span className="absolute top-[584px] left-[165px] w-[38px] border-t border-[#333]" />
      <SoilColumn />
      <span className="absolute top-[584px] left-[314px] w-[53px] border-t border-[#333]" />
      <p className="absolute top-[453px] left-[370px] w-[130px]">0,50 m - Feinsand, schluffig, zersetzt</p>
      <WeatheringColumn />
    </div>
  );
}

function Workspace() {
  return (
    <main className="ml-[6px] flex min-w-0 flex-1 flex-col">
      <div className="flex">
        <button className="flex h-[27px] w-[108px] items-center gap-2 bg-[#fafafa] pb-[2px] pl-[7px] text-[13px]">
          <LegendPage />
          unbenannt
        </button>
      </div>
      <div className="mr-1 flex flex-1 border-t border-r border-[#fafafa]">
        <div className="flex min-w-0 flex-1 flex-col border-t-2 border-l-[3px] border-[#fafafa]">
          <Canvas />
          <div className="flex h-[25px] items-center bg-[#f0f0f0] pb-[6px]">
            <span className="ml-[21%] h-[2px] w-[36%] rounded-full bg-[#8a8a8a]" />
          </div>
        </div>
        <div className="w-5 bg-[#f0f0f0] pt-[111px] pl-[9px]">
          <span className="block h-[140px] w-[2px] rounded-full bg-[#8a8a8a]" />
        </div>
      </div>
    </main>
  );
}

function StatusBar() {
  return (
    <footer className="grid grid-cols-[338px_188px_188px_125px_1fr] border-t border-[#d6d6d6] pt-[2px] text-[14px] leading-[18px]">
      <div className="border-r border-[#d6d6d6] text-center">
        Sonderzeichen
        <br />
        Ebene 1
      </div>
      <div className="border-r border-[#d6d6d6] pl-2">
        Pos X: 9,58 cm
        <br />
        Pos Y: 0.00 cm
      </div>
      <div className="border-r border-[#d6d6d6] pl-[7px]">
        Breite: 2,00 cm
        <br />
        Höhe: 29.70 cm
      </div>
      <div className="border-r border-[#d6d6d6] pl-[7px]">
        vertikal
        <br />
        fixiert
      </div>
      <div className="flex justify-between pl-[7px]">
        Ebene 1
        <svg viewBox="0 0 12 12" className="mr-[2px] size-3 self-end" aria-hidden="true">
          <path d="M9 1h2v2H9zM9 5h2v2H9zM5 5h2v2H5zM9 9h2v2H9zM5 9h2v2H5zM1 9h2v2H1z" fill="#bdbdbd" />
        </svg>
      </div>
    </footer>
  );
}

export default function App() {
  return (
    <div className={`flex min-h-screen flex-col bg-[#f0f0f0] text-[#111] ${UI_FONT}`}>
      <Gradients />
      <MenuBar />
      <div className="flex pl-[2px]">
        <ToolGroup tools={VIEW_TOOLS} width="w-[143px]" />
        <ToolGroup tools={FILE_TOOLS} width="w-[184px]" />
        <ToolGroup tools={ZOOM_TOOLS} width="w-[265px]" />
      </div>
      <div className="flex flex-1 pt-[1px]">
        <div className="ml-[3px] w-[45px] shrink-0 self-start border-r border-[#a3a3a3] pl-1">
          <ToolColumn tools={DRAW_TOOLS} height="pb-[18px] [&>div]:h-[303px]" active="Auswahl" />
          <ToolColumn tools={GEO_TOOLS} height="pb-8 [&>div]:h-[386px]" />
        </div>
        <div className="w-1 shrink-0" />
        <PropertiesPanel />
        <Workspace />
      </div>
      <StatusBar />
    </div>
  );
}
